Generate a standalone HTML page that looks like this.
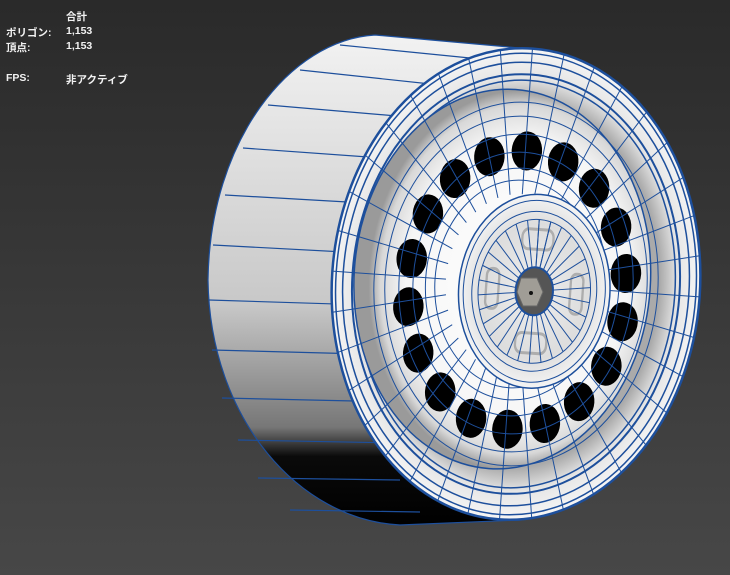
<!DOCTYPE html>
<html><head><meta charset="utf-8"><style>
html,body{margin:0;padding:0;width:730px;height:575px;overflow:hidden;background:linear-gradient(#2a2a2a,#474747);}
.t{position:absolute;color:#f2f2f2;font:bold 10.5px "Liberation Sans","Noto Sans CJK JP",sans-serif;white-space:nowrap;}
svg{position:absolute;left:0;top:0}
</style></head><body>
<svg width="730" height="575" viewBox="0 0 730 575">
<defs>
<linearGradient id="cyl" x1="0" y1="0" x2="0" y2="1">
<stop offset="0" stop-color="#f2f2f2"/><stop offset="0.55" stop-color="#c8c8c8"/><stop offset="0.8" stop-color="#777"/><stop offset="0.86" stop-color="#0a0a0a"/><stop offset="1" stop-color="#000"/></linearGradient>
<radialGradient id="face" cx="0.55" cy="0.5" r="0.5">
<stop offset="0" stop-color="#fff"/><stop offset="0.75" stop-color="#f6f6f6"/><stop offset="0.92" stop-color="#d8d8d8"/><stop offset="1" stop-color="#9a9a9a"/></radialGradient>
<radialGradient id="rim" cx="0.5" cy="0.5" r="0.5">
<stop offset="0.78" stop-color="#aaa"/><stop offset="0.88" stop-color="#e6e6e6"/><stop offset="1" stop-color="#f5f5f5"/></radialGradient>
<radialGradient id="hub" cx="0.5" cy="0.5" r="0.5">
<stop offset="0" stop-color="#eee"/><stop offset="0.7" stop-color="#ddd"/><stop offset="1" stop-color="#f4f4f4"/></radialGradient>
<clipPath id="fc"><circle cx="0" cy="0" r="236"/></clipPath>
</defs>
<path d="M375 35 L520 48 L520 520 L400 525 C300 520 210 420 208 280 C210 140 290 40 375 35 Z" fill="url(#cyl)" stroke="#1d4f9c" stroke-width="1.2"/>
<g stroke="#1d4f9c" stroke-width="1.2" fill="none">
<line x1="340" y1="45" x2="470" y2="58"/>
<line x1="300" y1="70" x2="440" y2="85"/>
<line x1="268" y1="105" x2="420" y2="118"/>
<line x1="243" y1="148" x2="410" y2="160"/>
<line x1="225" y1="195" x2="400" y2="205"/>
<line x1="213" y1="245" x2="400" y2="255"/>
<line x1="209" y1="300" x2="400" y2="306"/>
<line x1="212" y1="350" x2="400" y2="355"/>
<line x1="222" y1="398" x2="400" y2="402"/>
<line x1="238" y1="440" x2="400" y2="443"/>
<line x1="258" y1="478" x2="400" y2="480"/>
<line x1="290" y1="510" x2="420" y2="512"/>
</g>
<g transform="translate(516,284) rotate(4) scale(0.78,1)">
<g stroke="#1d4f9c" fill="none">
<circle r="236" fill="url(#rim)" stroke-width="2.5" vector-effect="non-scaling-stroke"/>
<circle r="231" stroke-width="1.5" vector-effect="non-scaling-stroke"/>
<circle r="222" stroke-width="1.5" vector-effect="non-scaling-stroke"/>
<circle r="210" stroke-width="2" vector-effect="non-scaling-stroke"/>
<circle r="204" stroke-width="1.5" vector-effect="non-scaling-stroke"/>
<circle cx="-18" cy="-4" r="190" fill="url(#face)" stroke-width="1.5" vector-effect="non-scaling-stroke"/>
</g>
<g fill="#000" transform="translate(2,6) scale(0.93)">
<circle cx="0" cy="-150" r="21"/><circle cx="51" cy="-141" r="21"/><circle cx="96" cy="-115" r="21"/><circle cx="130" cy="-75" r="21"/><circle cx="148" cy="-26" r="21"/><circle cx="148" cy="26" r="21"/><circle cx="130" cy="75" r="21"/><circle cx="96" cy="115" r="21"/><circle cx="51" cy="141" r="21"/><circle cx="0" cy="150" r="21"/><circle cx="-51" cy="141" r="21"/><circle cx="-96" cy="115" r="21"/><circle cx="-130" cy="75" r="21"/><circle cx="-148" cy="26" r="21"/><circle cx="-148" cy="-26" r="21"/><circle cx="-130" cy="-75" r="21"/><circle cx="-96" cy="-115" r="21"/><circle cx="-51" cy="-141" r="21"/>
</g>
<g fill="none" stroke="#1d4f9c" stroke-width="1">
<circle r="182" vector-effect="non-scaling-stroke"/>
<circle r="168" vector-effect="non-scaling-stroke"/>
<circle r="150" vector-effect="non-scaling-stroke"/>
<circle r="132" vector-effect="non-scaling-stroke"/>
<circle r="116" vector-effect="non-scaling-stroke"/>
<circle r="104" vector-effect="non-scaling-stroke"/>
</g>
<g clip-path="url(#fc)" stroke="#1d4f9c" stroke-width="1">
<g id="sp"><line x1="0" y1="-90" x2="0" y2="-236" vector-effect="non-scaling-stroke"/>
<line x1="0" y1="-90" x2="0" y2="-236" transform="rotate(10)" vector-effect="non-scaling-stroke"/>
<line x1="0" y1="-90" x2="0" y2="-236" transform="rotate(20)" vector-effect="non-scaling-stroke"/>
<line x1="0" y1="-90" x2="0" y2="-236" transform="rotate(30)" vector-effect="non-scaling-stroke"/>
<line x1="0" y1="-90" x2="0" y2="-236" transform="rotate(40)" vector-effect="non-scaling-stroke"/>
<line x1="0" y1="-90" x2="0" y2="-236" transform="rotate(50)" vector-effect="non-scaling-stroke"/>
<line x1="0" y1="-90" x2="0" y2="-236" transform="rotate(60)" vector-effect="non-scaling-stroke"/>
<line x1="0" y1="-90" x2="0" y2="-236" transform="rotate(70)" vector-effect="non-scaling-stroke"/>
<line x1="0" y1="-90" x2="0" y2="-236" transform="rotate(80)" vector-effect="non-scaling-stroke"/></g>
<use href="#sp" transform="rotate(90)"/><use href="#sp" transform="rotate(180)"/><use href="#sp" transform="rotate(270)"/>
</g>
<g transform="translate(24,6)">
<circle r="97" fill="url(#hub)" stroke="#1d4f9c" stroke-width="1.5" vector-effect="non-scaling-stroke"/>
<g fill="none" stroke="#1d4f9c" stroke-width="1">
<circle r="91" vector-effect="non-scaling-stroke"/><circle r="80" vector-effect="non-scaling-stroke"/><circle r="72" vector-effect="non-scaling-stroke"/>
</g>
<g fill="none" stroke="#999" stroke-width="3" opacity="0.7">
<rect x="-20" y="-62" width="40" height="20" rx="8"/><rect x="-20" y="42" width="40" height="20" rx="8"/>
<rect x="-62" y="-20" width="16" height="40" rx="7"/><rect x="46" y="-20" width="16" height="40" rx="7"/>
</g>
<g stroke="#1d4f9c" stroke-width="1">
<g id="hs"><line x1="0" y1="-22" x2="0" y2="-72" vector-effect="non-scaling-stroke"/>
<line x1="0" y1="-22" x2="0" y2="-72" transform="rotate(12)" vector-effect="non-scaling-stroke"/>
<line x1="0" y1="-22" x2="0" y2="-72" transform="rotate(24)" vector-effect="non-scaling-stroke"/>
<line x1="0" y1="-22" x2="0" y2="-72" transform="rotate(36)" vector-effect="non-scaling-stroke"/>
<line x1="0" y1="-22" x2="0" y2="-72" transform="rotate(48)" vector-effect="non-scaling-stroke"/>
<line x1="0" y1="-22" x2="0" y2="-72" transform="rotate(60)" vector-effect="non-scaling-stroke"/>
<line x1="0" y1="-22" x2="0" y2="-72" transform="rotate(72)" vector-effect="non-scaling-stroke"/>
<line x1="0" y1="-22" x2="0" y2="-72" transform="rotate(84)" vector-effect="non-scaling-stroke"/></g>
<use href="#hs" transform="rotate(96)"/><use href="#hs" transform="rotate(192)"/><use href="#hs" transform="rotate(288)"/>
</g>
<circle r="24" fill="#555" stroke="#1d4f9c" stroke-width="2" vector-effect="non-scaling-stroke"/>
</g>
</g>
<polygon points="521,278 537,278 543,292 537,306 523,306 517,292" fill="#a09d96" stroke="#666" stroke-width="1"/>
<circle cx="531" cy="293" r="2" fill="#111"/>
</svg>
<div class="t" style="left:66px;top:9px">合計</div>
<div class="t" style="left:6px;top:25px">ポリゴン:</div>
<div class="t" style="left:66px;top:25px">1,153</div>
<div class="t" style="left:6px;top:40px">頂点:</div>
<div class="t" style="left:66px;top:40px">1,153</div>
<div class="t" style="left:6px;top:72px">FPS:</div>
<div class="t" style="left:66px;top:72px">非アクティブ</div>
</body></html>
